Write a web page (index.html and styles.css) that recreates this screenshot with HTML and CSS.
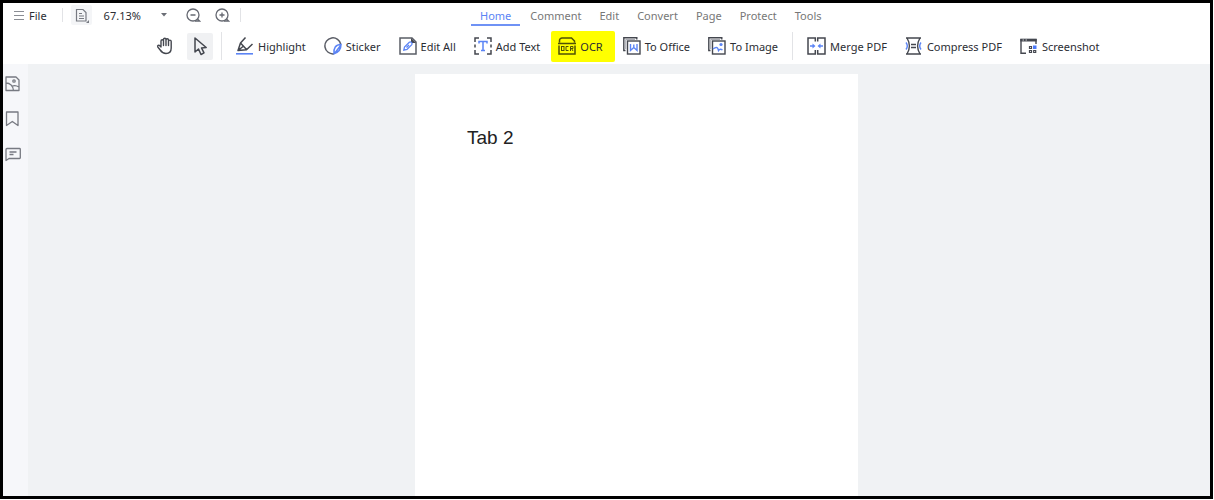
FILE: index.html
```html
<!DOCTYPE html>
<html lang="en">
<head>
    <meta charset="UTF-8">
    <meta name="viewport" content="width=device-width, initial-scale=1.0">
    <title>PDF Editor</title>
    <link rel="stylesheet" href="styles.css">
</head>
<body>
    <div class="window">
        <!-- Top bar: file menu, zoom and tabs -->
        <header class="topbar">
            <div class="quick">
                <button class="file-btn">
                    <svg width="10" height="10" viewBox="0 0 10 10" stroke="#8a8d94"><path d="M0 1.5h10M0 5.5h10M0 9.5h10"/></svg>
                    File
                </button>
                <span class="divider"></span>
                <button class="view-btn" aria-label="Page view">
                    <svg width="21" height="20" viewBox="0 0 21 20" fill="none" stroke="#777a82" stroke-width="1.2"><path d="M5.500 4.500h6.500l3 3V16H5.500zM8 8.500h3M8 11h5M8 13.500h5"/><path d="M18 15v3h-3z" fill="#777a82" stroke="none"/></svg>
                </button>
                <button class="zoom-value">67.13%
                    <svg width="6" height="4" viewBox="0 0 6 4"><path d="M0 0h6L3 3.500z" fill="#6b6e76"/></svg>
                </button>
                <button class="zoom-btn" aria-label="Zoom out">
                    <svg width="15" height="15" viewBox="0 0 15 15" fill="none" stroke="#666972" stroke-width="1.3"><circle cx="7" cy="7" r="6"/><path d="M4.500 7h5M9 13h4.500L11.500 11"/></svg>
                </button>
                <button class="zoom-btn" aria-label="Zoom in">
                    <svg width="15" height="15" viewBox="0 0 15 15" fill="none" stroke="#666972" stroke-width="1.3"><circle cx="7" cy="7" r="6"/><path d="M4.500 7h5M7 4.500v5M9 13h4.500L11.500 11"/></svg>
                </button>
                <span class="divider"></span>
            </div>
            <nav class="tabs">
                <a class="tab active" href="#home">Home</a>
                <a class="tab" href="#comment">Comment</a>
                <a class="tab" href="#edit">Edit</a>
                <a class="tab" href="#convert">Convert</a>
                <a class="tab" href="#page">Page</a>
                <a class="tab" href="#protect">Protect</a>
                <a class="tab" href="#tools">Tools</a>
            </nav>
        </header>

        <!-- Tools of the Home tab -->
        <div class="toolbar">
            <button class="icon-btn" aria-label="Hand">
                <svg width="18" height="18" viewBox="0 0 18 18" fill="none" stroke="#44474f" stroke-width="1.4" stroke-linecap="round" stroke-linejoin="round"><path d="M5 10V4a1.200 1.200 0 0 1 2.500 0V8.500M7.500 4V2.500a1.200 1.200 0 0 1 2.500 0V8.500M10 3a1.200 1.200 0 0 1 2.500 0V8.500M12.500 4.500a1.200 1.200 0 0 1 2.700 0V11c0 3.500-2 5.500-5.200 5.500-3.500 0-4.500-1.500-5.800-3.500L1.800 10c-.8-1.500 1-2.500 2-1.200L5 10"/></svg>
            </button>
            <button class="icon-btn selected" aria-label="Select">
                <svg width="18" height="20" viewBox="0 0 18 20" fill="none" stroke="#44474f" stroke-width="1.5" stroke-linejoin="round"><path d="M4 2v14l3.500-3 2.500 5.500 3-1.600-2.500-5 4.700-.4z"/></svg>
            </button>
            <span class="divider tall"></span>
            <button class="tool">
                <svg width="18" height="18" viewBox="0 0 18 18" fill="none" stroke="#44474f" stroke-width="1.500" stroke-linejoin="round"><path d="M9.500 0.500L4.500 6 2 13.500l8.500-.7L16.500 7M4.500 6L10.500 12.500M2 13.500l5-4"/><path d="M0 16.800h17" stroke="#5b84f5" stroke-width="1.6"/></svg>
                Highlight
            </button>
            <button class="tool">
                <svg width="18" height="18" viewBox="0 0 18 18" fill="none" stroke-width="1.5"><path d="M10 16.800A8 8 0 1 1 16.800 7.500" stroke="#5a5d66"/><path d="M17 7.500C11.500 7.500 9.500 11 10 16.800 14 15.500 17 12 17 7.500zM10.500 16.500L17 8" stroke="#5b84f5"/></svg>
                Sticker
            </button>
            <button class="tool">
                <svg width="18" height="18" viewBox="0 0 18 18" fill="none" stroke-width="1.5"><path d="M1 1h12l4 4v12H1z" stroke="#5a5d66"/><path d="M12 1l5 5h-5z" fill="#44474f"/><path d="M4.800 13.200l.7-3.200 4.800-4.800c1.500-1 3.500 1 2.500 2.500L8 12.500zM7.500 10.500l2.500-2.500" stroke="#5b84f5" stroke-width="1.300"/></svg>
                Edit All
            </button>
            <button class="tool">
                <svg width="18" height="18" viewBox="0 0 18 18" fill="none" stroke-width="1.5"><path d="M5 1H1v4M13 1h4v4M1 13v4h4M17 13v4h-4M1 7.500v3M17 7.500v3" stroke="#44474f"/><path d="M5 6.500V4.500h8v2M9 4.500v9M7 13.500h4" stroke="#5b84f5"/></svg>
                Add Text
            </button>
            <button class="tool marked">
                <svg width="18" height="18" viewBox="0 0 18 18" fill="none" stroke="#505206" stroke-width="1.500"><path d="M1.500 5.500V3.500a2.500 2.500 0 0 1 2.500-2.500h9.500l3 3v1.500M0 6.500h18M1 8.500V17h16V8.500"/><g stroke-width="1"><rect x="3.500" y="9.500" width="2.500" height="4"/><path d="M10.500 9.500H8v4h2.500M12.500 14V9.500H15v2h-2.500M13.500 11.500l1.500 2.500"/></g></svg>
                OCR
            </button>
            <button class="tool">
                <svg width="18" height="18" viewBox="0 0 18 18" fill="none" stroke="#44474f" stroke-width="1.4"><path d="M2.500 13.500H.8V.8h13V2.500"/><rect x="4.500" y="4" width="12.500" height="13"/><path d="M2.700 12V2.500H12" stroke="#9497a0" stroke-width=".8"/><path d="M7.500 7v6.500l3.300-3 3.200 3V7M10.800 7.500v3" stroke="#5b84f5"/></svg>
                To Office
            </button>
            <button class="tool">
                <svg width="18" height="18" viewBox="0 0 18 18" fill="none" stroke="#44474f" stroke-width="1.4"><path d="M2.500 13.500H.8V.8h13V2.500"/><rect x="4.500" y="4" width="12.500" height="13"/><path d="M2.700 12V2.500H12" stroke="#9497a0" stroke-width=".8"/><path d="M5 12c4-3 5-1 5.500 1.500 1-1.500 2.500-1.500 4-.5" stroke="#5b84f5"/><circle cx="13" cy="7.500" r="1.600" fill="#5b84f5" stroke="none"/></svg>
                To Image
            </button>
            <span class="divider tall"></span>
            <button class="tool">
                <svg width="19" height="18" viewBox="0 0 19 18" fill="none" stroke-width="1.5"><path d="M8.300 4.500V1H1v16h7.300V13M10.700 4.500V1H18v16h-7.300V13" stroke="#44474f"/><path d="M3 9h3M16 9h-3" stroke="#5b84f5"/><path d="M5.500 6.500L8.500 9l-3 2.500zM13.500 6.500L10.500 9l3 2.500z" fill="#5b84f5"/></svg>
                Merge PDF
            </button>
            <button class="tool">
                <svg width="18" height="18" viewBox="0 0 18 18" fill="none" stroke="#44474f" stroke-width="1.400"><path d="M1 1h15M1 17h15M2 1c3 5 3 11 0 16M15 1c-3 5-3 11 0 16M6 7.500h5M6 10.500h5"/><path d="M1 5.500c1.500 2 1.500 5 0 7M16 5.500c-1.500 2-1.500 5 0 7" stroke="#5b84f5"/></svg>
                Compress PDF
            </button>
            <button class="tool">
                <svg width="18" height="18" viewBox="0 0 18 18" fill="none" stroke="#44474f" stroke-width="1.400"><path d="M6 16.300H1V2.500h15V7"/><path d="M.3 3.200h16.400" stroke-width="2.600"/><path d="M2.500 3H4M5.500 3H7" stroke="#fff" stroke-width=".7"/><path d="M9.500 9.500h2v2h-2zM9.500 13.500h2v2h-2zM13.700 13.500h2v2h-2z" stroke-width="1.200"/><path d="M13 8.500h3.500V12H13z" fill="#4b78fa" stroke="none"/></svg>
                Screenshot
            </button>
        </div>

        <div class="workspace">
            <aside class="sidebar">
                <button class="side-btn" aria-label="Thumbnails">
                    <svg width="16" height="16" viewBox="0 0 16 16" fill="none" stroke="#777a82" stroke-width="1.3" stroke-linejoin="round"><path d="M1 1h10l3 3v10.500H1zM1 7c4 0 7 3 7.500 7.500M7 10.500c2-1.500 4.500-1 7 .5"/><circle cx="9" cy="5" r="1.200"/></svg>
                </button>
                <button class="side-btn" aria-label="Bookmarks">
                    <svg width="16" height="16" viewBox="0 0 16 16" fill="none" stroke="#777a82" stroke-width="1.3" stroke-linejoin="round"><path d="M1.500 1H13v13.500l-5.700-4-5.800 4z"/></svg>
                </button>
                <button class="side-btn" aria-label="Comments">
                    <svg width="16" height="16" viewBox="0 0 16 16" fill="none" stroke="#777a82" stroke-width="1.3" stroke-linejoin="round"><path d="M2 2.500h12.500q.8 0 .8.800v8.400q0 .8-.8.800H4L1 14.500V3.500q0-1 1-1zM4.500 6h7M4.500 8.500h4"/></svg>
                </button>
            </aside>
            <main class="viewer">
                <article class="page">
                    <p>Tab 2</p>
                </article>
            </main>
        </div>
    </div>
</body>
</html>
```
FILE: styles.css
```css
/* Base */
* {
    box-sizing: border-box;
}

body {
    margin: 0;
    font-family: "Noto Sans", "Open Sans", sans-serif;
    font-size: 11px;
    color: #2b2d33;
    background: #fff;
}

button {
    display: flex;
    align-items: center;
    padding: 0;
    border: none;
    background: none;
    font: inherit;
    color: inherit;
    white-space: nowrap;
    cursor: pointer;
}

svg {
    flex: none;
}

.window {
    display: flex;
    flex-direction: column;
    height: calc(100vh - 1px);
    margin-right: 1px;
    border: 3px solid #000;
    overflow: hidden;
}

.divider {
    width: 1px;
    height: 14px;
    background: #e2e3e6;
}

.divider.tall {
    height: 28px;
}

/* Top bar */
.topbar {
    display: flex;
    align-items: flex-start;
    height: 26px;
    background: #fff;
}

.quick {
    display: flex;
    align-items: center;
    width: 468px;
    height: 24px;
    padding-left: 11px;
}

.file-btn {
    gap: 5px;
    margin-right: 15px;
}

.view-btn {
    margin-left: 8px;
    background: #f4f5f7;
    border-radius: 2px;
}

.zoom-value {
    gap: 20px;
    margin: 0 19px 0 12px;
}

.zoom-btn {
    margin-right: 14px;
}

.zoom-btn + .divider {
    margin-left: -4px;
}

.tabs {
    display: flex;
    gap: 18px;
}

.tab {
    padding-top: 5px;
    line-height: 16px;
    color: #777;
    text-decoration: none;
}

.tab.active {
    padding: 5px 9px 0;
    margin-right: -8px;
    border-bottom: 2px solid #6f92f5;
    color: #5b84f5;
}

/* Toolbar */
.toolbar {
    display: flex;
    align-items: center;
    height: 35px;
    padding: 0 0 1px 149px;
    background: #fff;
}

.icon-btn {
    justify-content: center;
    width: 26px;
    height: 27px;
    margin-right: 9px;
    border-radius: 2px;
}

.icon-btn.selected {
    margin-right: 8px;
    background: #f0f1f3;
}

.tool {
    gap: 4px;
    height: 31px;
    padding: 0 7px;
    margin: 0 2px;
}

.divider.tall + .tool {
    margin-left: 7px;
}

.tool + .divider.tall {
    margin-left: 5px;
}

.tool.marked {
    padding-right: 12px;
    margin-right: -1px;
    background: #ff0;
    border-radius: 2px;
}

/* Workspace */
.workspace {
    display: flex;
    flex: 1;
    min-height: 0;
}

.sidebar {
    display: flex;
    flex-direction: column;
    gap: 19px;
    width: 25px;
    padding: 12px 0 0 2px;
    background: #f6f7fa;
}

.viewer {
    display: flex;
    flex: 1;
    justify-content: center;
    padding: 10px 0 0 35px;
    background: #f0f2f4;
}

.page {
    width: 443px;
    padding: 53px 52px;
    background: #fff;
}

.page p {
    margin: 0;
    font-family: "Liberation Sans", Arial, sans-serif;
    font-size: 19px;
    line-height: 22px;
    color: #222;
}
```
